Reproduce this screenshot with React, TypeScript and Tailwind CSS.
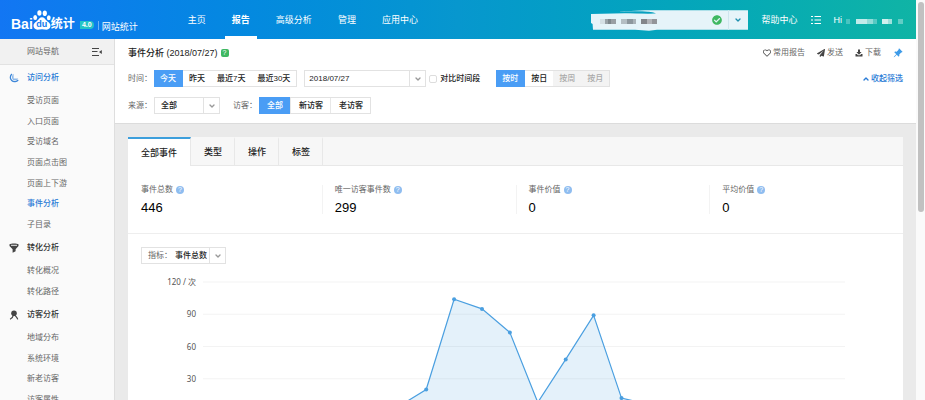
import { useState } from "react";
import type { ReactNode } from "react";
import clsx from "clsx";
import { ChevronDown, ChevronUp } from "lucide-react";
import { BsPinAngleFill } from "react-icons/bs";
import { FaCheckCircle, FaPaperPlane, FaRegHeart } from "react-icons/fa";

const navItems = ["主页", "报告", "高级分析", "管理", "应用中心"];

const tabs = ["全部事件", "类型", "操作", "标签"];

const stats = [
  { label: "事件总数", value: 446 },
  { label: "唯一访客事件数", value: 299 },
  { label: "事件价值", value: 0 },
  { label: "平均价值", value: 0 },
];

// events per hour, 0:00 - 23:00
const hourly = [
  0, 0, 0, 0, 0, 0, 0, 4, 20, 104, 95, 73, 8, 48, 89, 12, 6, 0, 0, 0, 0, 0, 0,
  0,
];

function Logo() {
  return (
    <a href="#" className="flex items-center pl-[11px] text-white">
      <span className="text-[14px] leading-[18px] font-bold mt-[9px]">Bai</span>
      <span className="relative w-[18px] h-5 block">
        <svg viewBox="0 0 18 20" className="w-full h-full" fill="currentColor">
          <ellipse cx="6.4" cy="3" rx="2.1" ry="2.8" />
          <ellipse cx="11.8" cy="3.200" rx="2.1" ry="2.8" />
          <ellipse cx="2.2" cy="7.400" rx="1.9" ry="2.500" />
          <ellipse cx="15.8" cy="7.800" rx="1.9" ry="2.500" />
          <path d="M9 7.2c2.200 0 3 1.600 4.200 3 1.600 1.700 4.300 2.700 4.300 5.600 0 2.300-1.700 3.900-3.900 3.900-1.700 0-2.900-.4-4.600-.4s-2.900.4-4.600.4c-2.200 0-3.900-1.600-3.900-3.900 0-2.900 2.700-3.900 4.300-5.600C6 8.800 6.800 7.200 9 7.200z" />
        </svg>
        <span className="absolute inset-x-0 bottom-px text-center text-[9px] leading-[9px] font-bold text-[#1179ec]">
          du
        </span>
      </span>
      <span className="text-[12px] leading-[18px] font-bold mt-2">统计</span>
      <span className="ml-[5px] mt-[10px] w-[14px] h-2 rounded-r-full rounded-l-xs bg-[#25c4c6] text-[7px] leading-[8px] font-bold text-center">
        4.0
      </span>
      <span className="ml-1 mt-3 h-[9px] border-l border-white/40" />
      <span className="ml-[3px] mt-[14px] text-[9px] leading-3">网站统计</span>
    </a>
  );
}

function SiteSwitch() {
  return (
    <button
      type="button"
      aria-label="切换网站"
      className="relative w-[157px] h-5 flex items-center"
    >
      <svg
        viewBox="0 0 157 20"
        preserveAspectRatio="none"
        className="absolute inset-0 w-full h-full overflow-visible"
      >
        <path
          d="M0 4 34 3.300 60 3.500 65 3.300 58 1.800 44 1.500 26 1.800 54 .300 157 .300V19.800H66L58 20.700 44 19.700H2L1.600 14 0 13z"
          fill="#e6f4f9"
        />
        <path d="M34 1.800C46 1.100 58 1.300 65 3.300 56 3.600 44 3.300 34 2.800z" fill="#08a0bf" />
        <path d="M137.500 0v20" stroke="#cfe6ee" />
      </svg>
      <span className="relative flex-1 flex h-[5px] mt-1 pl-[9px]">
        <i className="w-[5px] bg-[#d5e0e5]" />
        <i className="w-[3px] bg-[#9aa3a8]" />
        <i className="w-[3px] bg-[#7e878c]" />
        <i className="w-[5px] bg-[#999fa4]" />
        <i className="w-[6px] ml-[5px] bg-[#b4bec3]" />
        <i className="w-[6px] bg-[#8d979d]" />
        <i className="w-[3px] bg-[#aab3b8]" />
        <i className="w-[6px] ml-[5px] bg-[#83868a]" />
        <i className="w-[5px] bg-[#b2b4b8]" />
        <i className="w-[5px] bg-[#939599]" />
      </span>
      <FaCheckCircle className="relative size-[10px] text-[#3fb862]" />
      <ChevronDown
        className="relative size-2 ml-3 mr-[6px] text-[#1e8fae]"
        strokeWidth={4}
      />
    </button>
  );
}

function Header() {
  return (
    <header className="h-[39px] shrink-0 flex items-center bg-linear-to-r from-[#1276f3] via-[#0797ce] to-[#10b4a5] text-white text-[9px] leading-3">
      <Logo />
      <nav className="flex gap-3 ml-[43px] h-full">
        {navItems.map((item) => (
          <a
            key={item}
            href="#"
            className={clsx(
              "px-[7px] flex items-center border-b-3 pt-[3px]",
              item === "报告" ? "border-white font-bold" : "border-transparent"
            )}
          >
            {item}
          </a>
        ))}
      </nav>
      <div className="ml-auto mr-[13px] flex items-center">
        <SiteSwitch />
        <a href="#" className="ml-[13px]">
          帮助中心
        </a>
        <button type="button" aria-label="列表" className="ml-[13px]">
          <svg viewBox="0 0 10 10" className="size-[10px]" stroke="currentColor">
            <path d="M0 1.500h2M3.500 1.500H10M0 5h2M3.500 5H10M0 8.500h2M3.500 8.500H10" />
          </svg>
        </button>
        <a href="#" className="ml-[13px] flex items-center" aria-label="Hi">
          Hi
          <span className="flex h-[5px] ml-1 mt-1 w-[57px]">
            <i className="w-1 bg-white/25" />
            <i className="w-[11px] ml-[6px] bg-white/75" />
            <i className="w-[6px] bg-white/55" />
            <i className="w-1 bg-white/30" />
            <i className="w-[6px] ml-[5px] bg-white/80" />
            <i className="w-1 bg-white/60" />
            <i className="w-[5px] ml-[6px] bg-white/35" />
          </span>
        </a>
      </div>
    </header>
  );
}

const sections = [
  {
    title: "访问分析",
    current: true,
    listClass: "h-[144px]",
    icon: (
      <svg viewBox="0 0 10 10" className="size-[10px]" fill="none">
        <path
          d="M3 1A4.300 4.300 0 1 0 9.200 6.800"
          stroke="#3d86d8"
          strokeWidth="1.300"
        />
        <path
          d="M4.600.800V5.400H9.300A4.600 4.600 0 0 1 4 7 4.300 4.300 0 0 1 4.600.800z"
          fill="#8db9ea"
        />
      </svg>
    ),
    items: [
      "受访页面",
      "入口页面",
      "受访域名",
      "页面点击图",
      "页面上下游",
      "事件分析",
      "子目录",
    ],
  },
  {
    title: "转化分析",
    listClass: "h-[41px]",
    icon: (
      <svg viewBox="0 0 10 10" className="size-[10px]">
        <path
          d="M.5 1.200C2 .3 8 .3 9.500 1.200V3L6.600 6.200V8.300L3.600 9.700V6.200L.5 3z"
          fill="#444"
        />
        <path d="M2 2.300H8" stroke="#fafafa" strokeWidth=".9" />
      </svg>
    ),
    items: ["转化概况", "转化路径"],
  },
  {
    title: "访客分析",
    listClass: "h-[82px]",
    icon: (
      <svg viewBox="0 0 10 10" className="size-[10px]">
        <circle cx="5" cy="3.200" r="2.800" fill="#444" />
        <path
          d="M4.300 5.300C3.800 7.600 2.600 8.700 1 9.200M6 5.300C6.800 6.500 8.300 7.300 8.700 9.400"
          stroke="#444"
          strokeWidth="1.200"
          fill="none"
        />
      </svg>
    ),
    items: ["地域分布", "系统环境", "新老访客", "访客属性"],
  },
];

function Sidebar() {
  return (
    <aside className="w-[115px] shrink-0 bg-[#fafafa] border-r border-[#dedede] text-[8px] leading-3 text-[#666] overflow-hidden">
      <div className="h-[26px] pl-[27px] pr-3 flex items-center justify-between bg-[#f1f1f1] border-b border-[#e2e2e2]">
        网站导航
        <button type="button" aria-label="收起导航">
          <svg viewBox="0 0 10 8" className="w-[10px] h-2">
            <path d="M0 .5H7M0 3.500H5.500M0 7.500H7" stroke="#444" />
            <path d="M9.800 2V6L7 4z" fill="#444" />
          </svg>
        </button>
      </div>
      {sections.map((section) => (
        <section key={section.title}>
          <h3
            className={clsx(
              "h-[26px] pl-[9px] flex items-center gap-2 font-medium",
              section.current ? "text-[#2a7bd6]" : "text-[#333]"
            )}
          >
            {section.icon}
            {section.title}
          </h3>
          <ul className={clsx("flex flex-col", section.listClass)}>
            {section.items.map((item) => (
              <li key={item} className="flex-1 flex items-center pl-[27px]">
                <a
                  href="#"
                  className={clsx(
                    item === "事件分析" && "text-[#2a7bd6] font-medium"
                  )}
                >
                  {item}
                </a>
              </li>
            ))}
          </ul>
        </section>
      ))}
    </aside>
  );
}

type ButtonGroupProps = {
  options: string[];
  disabled?: string[];
  divided?: boolean;
};

function ButtonGroup({ options, disabled = [], divided }: ButtonGroupProps) {
  const [selected, setSelected] = useState(options[0]);

  return (
    <div className="flex h-[17px] border border-[#e2e2e2] bg-white text-[#222]">
      {options.map((option) => (
        <button
          key={option}
          type="button"
          disabled={disabled.includes(option)}
          onClick={() => setSelected(option)}
          className={clsx(
            "font-medium",
            divided ? "pl-2 pr-[7px]" : "px-[6px]",
            option === selected && "-my-px -ml-px pr-[7px] bg-[#4a9df5] text-white",
            disabled.includes(option) && "bg-[#f3f3f3] text-[#aaa]",
            divided && option !== options[0] && "border-l border-[#e8e8e8]"
          )}
        >
          {option}
        </button>
      ))}
    </div>
  );
}

type DropdownProps = {
  id: string;
  value: string;
  className: string;
};

function Dropdown({ id, value, className }: DropdownProps) {
  return (
    <div className={clsx("relative h-full", className)}>
      <select
        id={id}
        aria-label={value}
        className="appearance-none w-full h-full pr-4 font-medium text-[#222] block"
      >
        <option>{value}</option>
      </select>
      <span className="pointer-events-none absolute right-0 inset-y-0 w-4 border-l border-[#e2e2e2] flex items-center justify-center">
        <ChevronDown className="size-2 text-[#999]" strokeWidth={4} />
      </span>
    </div>
  );
}

function ToolLink({ icon, children }: { icon: ReactNode; children: string }) {
  return (
    <a href="#" className="flex items-center gap-[2px]">
      {icon}
      {children}
    </a>
  );
}

function FilterPanel() {
  return (
    <div className="bg-white border-b border-[#dcdcdc] px-[13px] pt-[7px] pb-[9px] text-[8px] leading-3 text-[#666]">
      <div className="flex items-center h-[14px]">
        <h1 className="text-[9px] text-[#222] font-medium">
          事件分析 (2018/07/27)
        </h1>
        <span className="ml-[3px] size-2 rounded-xs bg-[#3fb862] text-white text-[7px] leading-[8px] text-center">
          ?
        </span>
        <div className="ml-auto flex items-center gap-3">
          <ToolLink icon={<FaRegHeart className="size-2 text-[#444]" />}>
            常用报告
          </ToolLink>
          <ToolLink icon={<FaPaperPlane className="size-2 text-[#444]" />}>
            发送
          </ToolLink>
          <ToolLink
            icon={
              <svg viewBox="0 0 8 8" className="size-2" fill="#444">
                <path d="M3 .5H5V3H6.600L4 5.700 1.400 3H3zM.5 5H1.800L3 6.300H5L6.200 5H7.500V7.500H.5z" />
              </svg>
            }
          >
            下载
          </ToolLink>
          <button type="button" aria-label="固定">
            <BsPinAngleFill className="size-[10px] text-[#3d9be8]" />
          </button>
        </div>
      </div>

      <div className="flex items-center mt-[10px]">
        <span className="w-[26px]">时间：</span>
        <ButtonGroup options={["今天", "昨天", "最近7天", "最近30天"]} />
        <div className="ml-[7px] h-[17px] border border-[#e2e2e2]">
          <Dropdown id="date" value="2018/07/27" className="w-[120px] pl-1" />
        </div>
        <label className="ml-[3px] flex items-center gap-[3px] text-[#222] font-medium">
          <input
            type="checkbox"
            className="appearance-none size-2 border border-[#ddd] rounded-xs bg-white"
          />
          对比时间段
        </label>
        <div className="ml-4">
          <ButtonGroup
            options={["按时", "按日", "按周", "按月"]}
            disabled={["按周", "按月"]}
          />
        </div>
        <button
          type="button"
          className="ml-auto flex items-center gap-px text-[#2a7bd6] font-medium"
        >
          <ChevronUp className="size-2" strokeWidth={4} />
          收起筛选
        </button>
      </div>

      <div className="flex items-center mt-[10px]">
        <label htmlFor="source" className="w-[26px]">
          来源：
        </label>
        <div className="h-[17px] border border-[#e2e2e2]">
          <Dropdown id="source" value="全部" className="w-16 pl-[6px]" />
        </div>
        <span className="ml-[13px] w-[26px]">访客：</span>
        <ButtonGroup divided options={["全部", "新访客", "老访客"]} />
      </div>
    </div>
  );
}

function Chart() {
  const x = (i: number) => 75 + i * 27.9;
  const y = (v: number) => 147 - v * 1.075;
  const line = hourly.map((v, i) => `${x(i)},${y(v)}`).join(" ");

  return (
    <svg viewBox="0 0 775 160" className="w-full block">
      {[120, 90, 60, 30].map((tick) => (
        <g key={tick}>
          <path d={`M75 ${y(tick)}H717`} stroke="#f3f3f3" />
          <text
            x="68"
            y={y(tick) + 3}
            textAnchor="end"
            fill="#555"
            className="text-[8px] font-['Noto_Sans','Noto_Sans_CJK_SC',sans-serif]"
          >
            {tick === 120 ? "120 / 次" : tick}
          </text>
        </g>
      ))}
      <polygon
        points={`${x(0)},${y(0)} ${line} ${x(23)},${y(0)}`}
        fill="#4a9fe0"
        fillOpacity="0.15"
      />
      <polyline points={line} fill="none" stroke="#4a9fe0" strokeWidth="1.200" />
      {hourly.map((v, i) => (
        <circle key={i} cx={x(i)} cy={y(v)} r="2" fill="#4a9fe0" />
      ))}
    </svg>
  );
}

function Report() {
  const [activeTab, setActiveTab] = useState(tabs[0]);

  return (
    <article className="mx-[13px] mt-[13px] bg-white">
      <div className="flex h-[29px] bg-[#f7f7f7] border-b border-[#e8e8e8] text-[9px] leading-3 text-[#222]">
        {tabs.map((tab) => (
          <button
            key={tab}
            type="button"
            onClick={() => setActiveTab(tab)}
            className={clsx(
              "border-r border-t-2 border-r-[#e8e8e8] font-medium",
              tab === activeTab
                ? "px-[13px] bg-white border-t-[#3d9fdc] -mb-px"
                : "pl-[13px] pr-3 border-t-transparent"
            )}
          >
            {tab}
          </button>
        ))}
      </div>

      <div className="grid grid-cols-4 pt-[19px] pb-[19px] border-b border-[#eee]">
        {stats.map((stat, i) => (
          <div
            key={stat.label}
            className={clsx(
              "h-[29px]",
              i > 0 ? "pl-3 border-l border-[#f3f3f3]" : "pl-[13px]"
            )}
          >
            <div className="flex items-center gap-[3px] text-[8px] leading-[10px] text-[#666]">
              {stat.label}
              <span className="size-2 rounded-full bg-[#8fbdf0] text-white text-[7px] leading-[8px] text-center">
                ?
              </span>
            </div>
            <div className="text-[13px] leading-4 mt-[5px] text-black">
              {stat.value}
            </div>
          </div>
        ))}
      </div>

      <div className="px-[13px] pt-[13px] flex text-[8px] leading-3 text-[#666]">
        <div className="flex items-center h-[17px] border border-[#e2e2e2] pl-[6px]">
          <label htmlFor="metric" className="w-[27px]">
            指标：
          </label>
          <Dropdown id="metric" value="事件总数" className="w-[50px]" />
        </div>
      </div>
      <Chart />
    </article>
  );
}

export default function App() {
  return (
    <div className="flex h-screen overflow-hidden bg-[#fafafa] font-['Liberation_Sans','Noto_Sans_CJK_SC',sans-serif]">
      <div className="flex-1 min-w-0 flex flex-col">
        <Header />
        <div className="flex flex-1 min-h-0">
          <Sidebar />
          <main className="flex-1 min-w-0 bg-[#eaeaea] overflow-hidden">
            <FilterPanel />
            <Report />
          </main>
        </div>
      </div>
      <div className="w-[9px] shrink-0 pl-[2px] pr-px pt-[2px]">
        <div className="h-[210px] rounded-full bg-[#c1c1c1]" />
      </div>
    </div>
  );
}
